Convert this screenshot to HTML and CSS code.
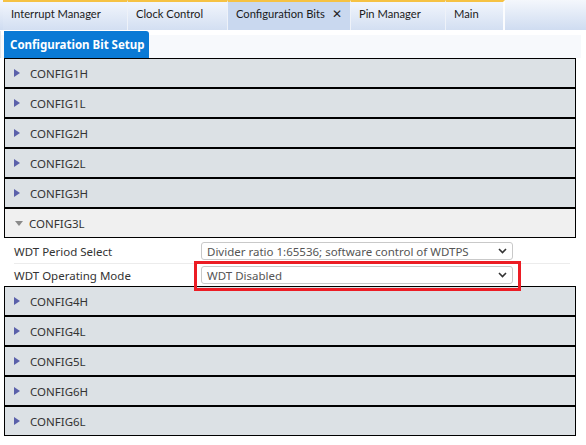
FILE: index.html
```html
<!DOCTYPE html>
<html>
<head>
<meta charset="utf-8">
<link rel="stylesheet" href="styles.css">
</head>
<body>
<div class="tabbar">
  <div class="tab w-int">Interrupt Manager</div>
  <div class="tab w-clk">Clock Control</div>
  <div class="tab w-cfg active">Configuration Bits<span class="close">✕</span></div>
  <div class="tab w-pin">Pin Manager</div>
  <div class="tab w-main">Main</div>
  <div class="tab-rest"></div>
</div>
<div class="subbar">
  <div class="subtab">Configuration Bit Setup</div>
</div>
<div class="accordion">
  <div class="hdr"><span class="tri"></span>CONFIG1H</div>
  <div class="hdr"><span class="tri"></span>CONFIG1L</div>
  <div class="hdr"><span class="tri"></span>CONFIG2H</div>
  <div class="hdr"><span class="tri"></span>CONFIG2L</div>
  <div class="hdr"><span class="tri"></span>CONFIG3H</div>
  <div class="hdr open"><span class="tri-down"></span>CONFIG3L</div>
  <div class="panel">
    <div class="prow first">
      <div class="plabel">WDT Period Select</div>
      <div class="sel">
        <span class="sel-text">Divider ratio 1:65536; software control of WDTPS</span>
        <svg class="chev" width="9" height="6" viewBox="0 0 9 6"><polyline points="1,1 4.5,4.5 8,1" fill="none" stroke="#333" stroke-width="1.6"/></svg>
      </div>
    </div>
    <div class="prow">
      <div class="plabel">WDT Operating Mode</div>
      <div class="sel hl-wrap">
        <span class="sel-text">WDT Disabled</span>
        <svg class="chev" width="9" height="6" viewBox="0 0 9 6"><polyline points="1,1 4.5,4.5 8,1" fill="none" stroke="#333" stroke-width="1.6"/></svg>
        <div class="highlight"></div>
      </div>
    </div>
  </div>
  <div class="hdr"><span class="tri"></span>CONFIG4H</div>
  <div class="hdr"><span class="tri"></span>CONFIG4L</div>
  <div class="hdr"><span class="tri"></span>CONFIG5L</div>
  <div class="hdr"><span class="tri"></span>CONFIG6H</div>
  <div class="hdr"><span class="tri"></span>CONFIG6L</div>
</div>
</body>
</html>
```
FILE: styles.css
```css
* { box-sizing: border-box; }
html, body { margin: 0; padding: 0; background: #fff; }
body {
  font-family: "Noto Sans", "Open Sans", sans-serif;
  font-size: 11.5px;
  color: #333;
  width: 586px;
  height: 445px;
  overflow: hidden;
}
.tabbar {
  display: flex;
  height: 30px;
  padding-left: 3px;
  background: linear-gradient(#f4f7fc, #cfdcf1);
}
.tab {
  height: 30px;
  border-top: 2px solid #f6c243;
  border-right: 1px solid #eef2f9;
  padding-left: 8px;
  line-height: 24px;
  font-family: "Lato", "Noto Sans", sans-serif;
  font-size: 11.2px;
  color: #1b1b1b;
  background: linear-gradient(#f1f5fc, #d3dff2);
  white-space: nowrap;
}
.tab.active { background: #c9d8ef; }
.w-int { width: 125px; }
.w-clk { width: 100px; }
.w-cfg { width: 123px; }
.w-pin { width: 95px; }
.w-main { width: 59px; border-right: 2px solid #fbfcfe; }
.tab-rest { flex: 1; }
.close { margin-left: 7px; font-size: 12px; color: #222; }
.subbar {
  margin-top: 1px;
  height: 27px;
  margin-right: 5px;
  padding-left: 4px;
  display: flex;
  background: linear-gradient(#fff 0, #fff 4px, #f7f9fc 4px);
  border-left: 1px solid #e4e7eb;
}
.subtab {
  width: 145px;
  height: 27px;
  margin-left: -1px;
  background: #0a7ad5;
  color: #fff;
  font-weight: bold;
  padding-left: 6px;
  line-height: 27px;
  border-top-right-radius: 3px;
  white-space: nowrap;
}
.accordion {
  margin-left: 4px;
  width: 572px;
}
.hdr {
  height: 30px;
  border: 1px solid #000;
  background: #dce1e5;
  display: flex;
  align-items: center;
  color: #333;
}
.hdr.open { background: #f0f0f0; }
.tri {
  width: 0; height: 0;
  margin-left: 9px;
  margin-right: 10px;
  border-left: 6px solid #5a60aa;
  border-top: 4.5px solid transparent;
  border-bottom: 4.5px solid transparent;
}
.tri-down {
  width: 0; height: 0;
  margin-left: 10px;
  margin-right: 6px;
  border-top: 5px solid #8a8a8a;
  border-left: 4.5px solid transparent;
  border-right: 4.5px solid transparent;
}
.panel {
  height: 48px;
  padding: 1px 6px 0 10px;
}
.prow {
  display: flex;
  align-items: center;
  height: 22px;
}
.prow.first {
  height: 25px;
  border-bottom: 1px solid #ececec;
}
.plabel { width: 187px; }
.sel {
  position: relative;
  width: 312px;
  height: 18px;
  border: 1px solid #c9c9c9;
  border-radius: 3px;
  background: #fff;
  display: flex;
  align-items: center;
  justify-content: space-between;
  padding: 0 5px 0 5px;
  color: #555;
}
.chev { display: block; }
.highlight {
  position: absolute;
  left: -8px;
  right: -9px;
  top: -6px;
  bottom: -8px;
  border: 3px solid #ec1c24;
  pointer-events: none;
}
```
